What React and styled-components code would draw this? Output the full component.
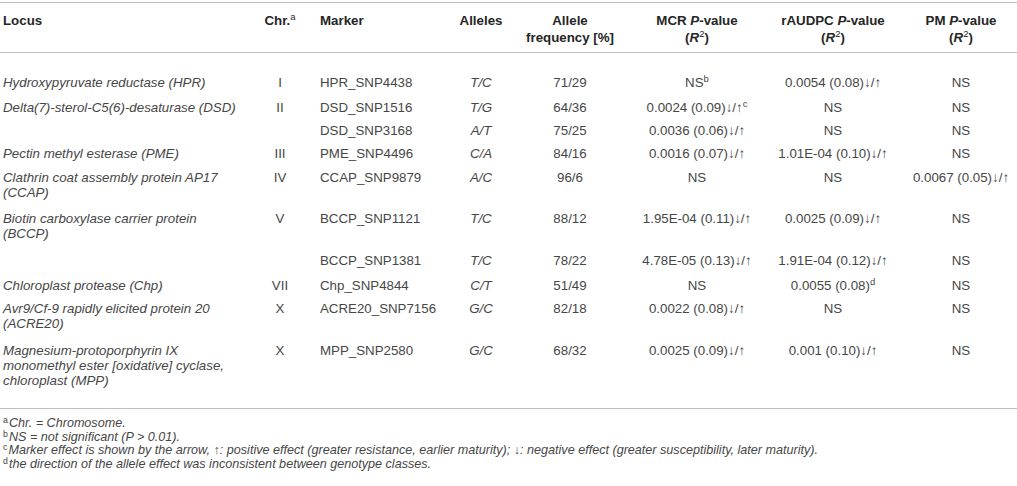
import React from "react";
import styled, { createGlobalStyle } from "styled-components";

const GlobalStyle = createGlobalStyle`
  html, body { margin: 0; padding: 0; background: #ffffff; }
  body { font-family: "Liberation Sans", Arial, Helvetica, sans-serif; }
`;

const LINE = "#bdbdbd";

const Page = styled.div`
  width: 1017px;
  padding-top: 2px;
  color: #444;
`;

const Table = styled.table`
  width: 1017px;
  table-layout: fixed;
  border-collapse: collapse;
  border-top: 1px solid ${LINE};
  border-bottom: 1px solid ${LINE};
  font-size: 13.3px;
`;

const Head = styled.thead`
  border-bottom: 1px solid ${LINE};
`;

const Sup = styled.sup`
  font-size: 9.5px;
  font-weight: normal;
  line-height: 0;
  vertical-align: baseline;
  position: relative;
  top: -5px;
`;

const Th = styled.th`
  padding: 8.5px 0 6.5px ${(p) => p.$indent || 0}px;
  line-height: 17px;
  vertical-align: top;
  font-weight: bold;
  color: #262626;
  text-align: ${(p) => p.$align || "center"};
  white-space: nowrap;
`;

const Row = styled.tr`
  td {
    padding-top: ${(p) => (p.$first ? 19.9 : 4) + (p.$sup ? 1.8 : 0)}px;
    padding-bottom: ${(p) => (p.$last ? 20.1 : p.$wrap ? 7.6 : 4.3)}px;
  }
`;

const Td = styled.td`
  padding-left: ${(p) => p.$indent || 0}px;
  padding-right: 0;
  line-height: 15px;
  vertical-align: top;
  text-align: ${(p) => p.$align || "center"};
  font-style: ${(p) => (p.$italic ? "italic" : "normal")};
  white-space: nowrap;
  color: #464646;
`;

const Notes = styled.div`
  padding: 8px 0 0 3px;
  font-size: 12.6px;
  line-height: 13.7px;
  color: #464646;
`;

const Note = styled.div`
  font-style: italic;
  white-space: nowrap;
`;

const Mark = styled.span`
  font-style: normal;
  font-size: 8.8px;
  line-height: 0;
  position: relative;
  top: -4px;
  margin-right: 1px;
`;

const cols = [255, 50, 150, 52, 126, 128, 144, 112];

const rows = [
  {
    locus: ["Hydroxypyruvate reductase (HPR)"],
    chr: "I",
    marker: "HPR_SNP4438",
    alleles: "T/C",
    freq: "71/29",
    mcr: (
      <>
        NS<Sup>b</Sup>
      </>
    ),
    raudpc: "0.0054 (0.08)↓/↑",
    pm: "NS",
    sup: true,
  },
  {
    locus: ["Delta(7)-sterol-C5(6)-desaturase (DSD)"],
    chr: "II",
    marker: "DSD_SNP1516",
    alleles: "T/G",
    freq: "64/36",
    mcr: (
      <>
        0.0024 (0.09)↓/↑<Sup>c</Sup>
      </>
    ),
    raudpc: "NS",
    pm: "NS",
    sup: true,
  },
  {
    locus: [],
    chr: "",
    marker: "DSD_SNP3168",
    alleles: "A/T",
    freq: "75/25",
    mcr: "0.0036 (0.06)↓/↑",
    raudpc: "NS",
    pm: "NS",
  },
  {
    locus: ["Pectin methyl esterase (PME)"],
    chr: "III",
    marker: "PME_SNP4496",
    alleles: "C/A",
    freq: "84/16",
    mcr: "0.0016 (0.07)↓/↑",
    raudpc: "1.01E-04 (0.10)↓/↑",
    pm: "NS",
  },
  {
    locus: ["Clathrin coat assembly protein AP17", "(CCAP)"],
    chr: "IV",
    marker: "CCAP_SNP9879",
    alleles: "A/C",
    freq: "96/6",
    mcr: "NS",
    raudpc: "NS",
    pm: "0.0067 (0.05)↓/↑",
  },
  {
    locus: ["Biotin carboxylase carrier protein", "(BCCP)"],
    chr: "V",
    marker: "BCCP_SNP1121",
    alleles: "T/C",
    freq: "88/12",
    mcr: "1.95E-04 (0.11)↓/↑",
    raudpc: "0.0025 (0.09)↓/↑",
    pm: "NS",
  },
  {
    locus: [],
    chr: "",
    marker: "BCCP_SNP1381",
    alleles: "T/C",
    freq: "78/22",
    mcr: "4.78E-05 (0.13)↓/↑",
    raudpc: "1.91E-04 (0.12)↓/↑",
    pm: "NS",
  },
  {
    locus: ["Chloroplast protease (Chp)"],
    chr: "VII",
    marker: "Chp_SNP4844",
    alleles: "C/T",
    freq: "51/49",
    mcr: "NS",
    raudpc: (
      <>
        0.0055 (0.08)<Sup>d</Sup>
      </>
    ),
    pm: "NS",
    sup: true,
  },
  {
    locus: ["Avr9/Cf-9 rapidly elicited protein 20", "(ACRE20)"],
    chr: "X",
    marker: "ACRE20_SNP7156",
    alleles: "G/C",
    freq: "82/18",
    mcr: "0.0022 (0.08)↓/↑",
    raudpc: "NS",
    pm: "NS",
  },
  {
    locus: [
      "Magnesium-protoporphyrin IX",
      "monomethyl ester [oxidative] cyclase,",
      "chloroplast (MPP)",
    ],
    chr: "X",
    marker: "MPP_SNP2580",
    alleles: "G/C",
    freq: "68/32",
    mcr: "0.0025 (0.09)↓/↑",
    raudpc: "0.001 (0.10)↓/↑",
    pm: "NS",
  },
];

const Locus = ({ lines }) =>
  lines.map((l, i) => (
    <React.Fragment key={i}>
      {i > 0 && <br />}
      {l}
    </React.Fragment>
  ));

const R2 = () => (
  <>
    (<i>R</i>
    <Sup>2</Sup>)
  </>
);

export default function App() {
  return (
    <Page>
      <GlobalStyle />
      <Table>
        <colgroup>
          {cols.map((w, i) => (
            <col key={i} style={{ width: w }} />
          ))}
        </colgroup>
        <Head>
          <tr>
            <Th $align="left" $indent={3}>
              Locus
            </Th>
            <Th>
              Chr.<Sup>a</Sup>
            </Th>
            <Th $align="left" $indent={15}>
              Marker
            </Th>
            <Th>Alleles</Th>
            <Th>
              Allele
              <br />
              frequency [%]
            </Th>
            <Th>
              MCR <i>P</i>-value
              <br />
              <R2 />
            </Th>
            <Th>
              rAUDPC <i>P</i>-value
              <br />
              <R2 />
            </Th>
            <Th>
              PM <i>P</i>-value
              <br />
              <R2 />
            </Th>
          </tr>
        </Head>
        <tbody>
          {rows.map((r, i) => (
            <Row
              key={i}
              $first={i === 0}
              $last={i === rows.length - 1}
              $sup={!!r.sup}
              $wrap={r.locus.length > 1}
            >
              <Td $align="left" $indent={3} $italic>
                <Locus lines={r.locus} />
              </Td>
              <Td>{r.chr}</Td>
              <Td $align="left" $indent={15}>
                {r.marker}
              </Td>
              <Td $italic>{r.alleles}</Td>
              <Td>{r.freq}</Td>
              <Td>{r.mcr}</Td>
              <Td>{r.raudpc}</Td>
              <Td>{r.pm}</Td>
            </Row>
          ))}
        </tbody>
      </Table>
      <Notes>
        <Note>
          <Mark>a</Mark>Chr. = Chromosome.
        </Note>
        <Note>
          <Mark>b</Mark>NS = not significant (P &gt; 0.01).
        </Note>
        <Note>
          <Mark>c</Mark>Marker effect is shown by the arrow, ↑: positive effect
          (greater resistance, earlier maturity); ↓: negative effect (greater
          susceptibility, later maturity).
        </Note>
        <Note>
          <Mark>d</Mark>the direction of the allele effect was inconsistent
          between genotype classes.
        </Note>
      </Notes>
    </Page>
  );
}
